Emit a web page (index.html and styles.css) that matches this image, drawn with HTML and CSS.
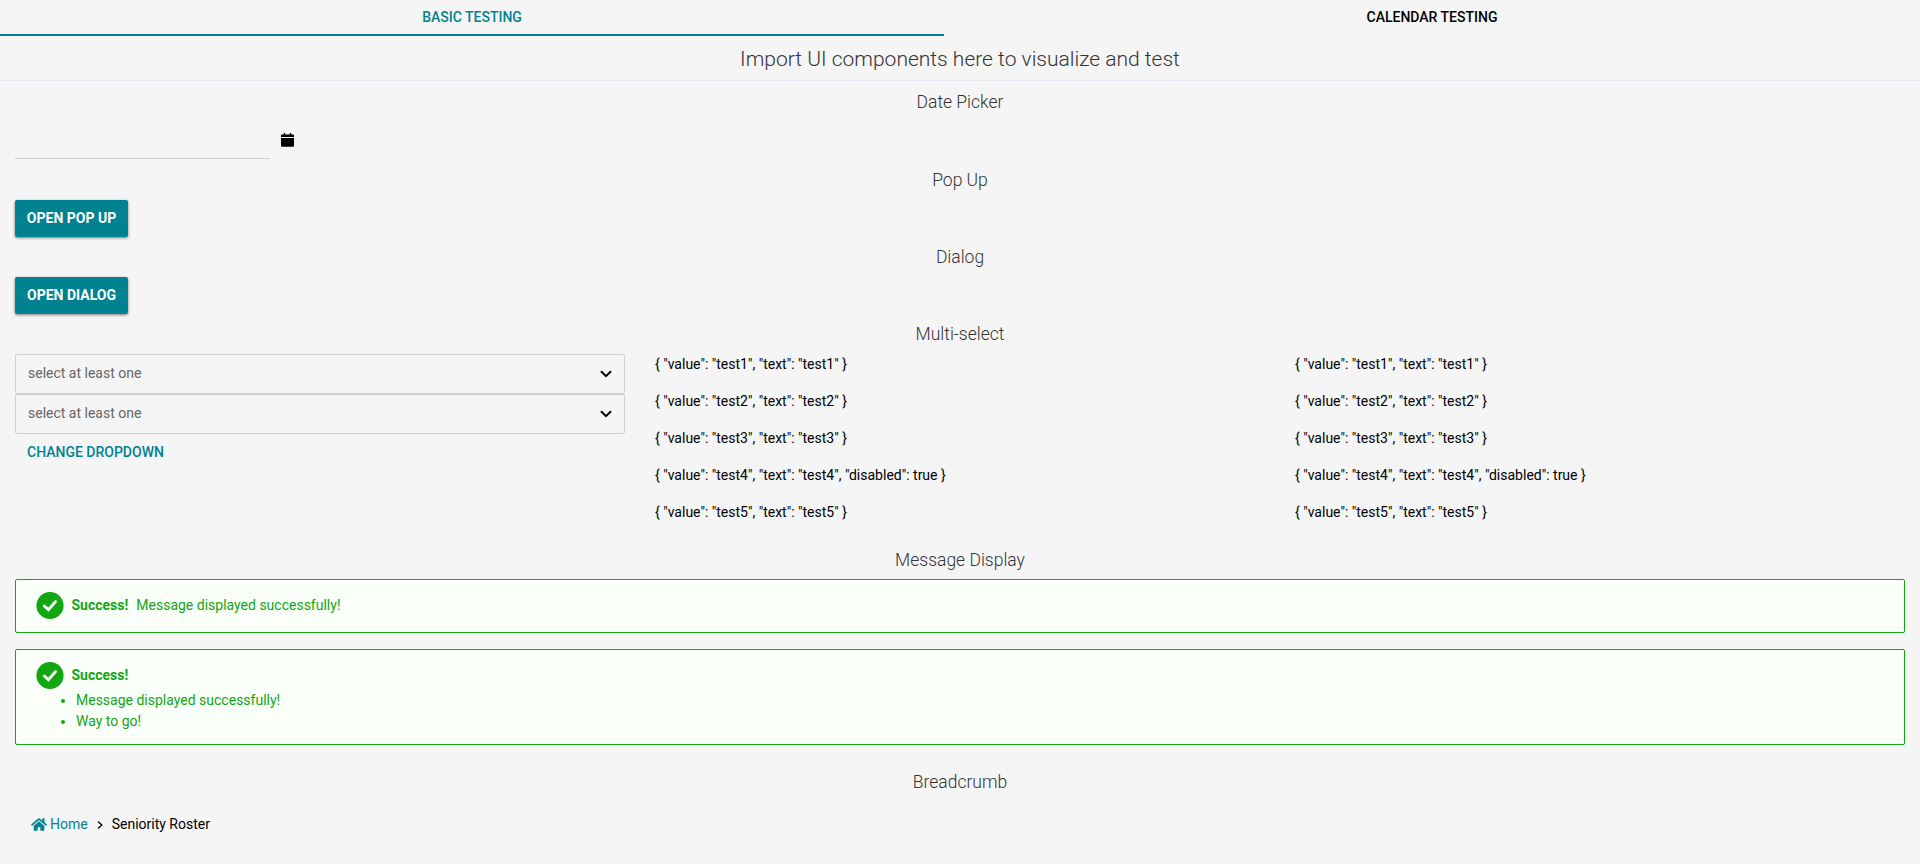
FILE: index.html
```html
<!DOCTYPE html>
<html lang="en">
<head>
<meta charset="utf-8">
<title>UI Components</title>
<link rel="stylesheet" href="styles.css">
</head>
<body>
<nav class="tabs">
  <a class="tab tab-active">BASIC TESTING</a>
  <a class="tab tab-second">CALENDAR TESTING</a>
</nav>
<h1 class="title">Import UI components here to visualize and test</h1>
<main class="content">
  <h2 class="heading heading-low">Date Picker</h2>
  <div class="date-picker">
    <input class="date-input" type="text" aria-label="Date">
    <svg class="calendar-icon" viewBox="0 0 13 14"><path d="M1 1.500h1.800V0h1.400v1.500h4.600V0h1.400v1.500H12a1 1 0 0 1 1 1V4H0V2.500a1 1 0 0 1 1-1zM0 5h13v7.800a1 1 0 0 1-1 1H1a1 1 0 0 1-1-1z"/></svg>
  </div>
  <h2 class="heading">Pop Up</h2>
  <button class="button">OPEN POP UP</button>
  <h2 class="heading">Dialog</h2>
  <button class="button">OPEN DIALOG</button>
  <h2 class="heading">Multi-select</h2>
  <div class="columns">
    <div class="column">
      <div class="select"><span>select at least one</span><svg class="chevron" viewBox="0 0 12 8"><path d="M1 1.200 6 6.200 11 1.200"/></svg></div>
      <div class="select"><span>select at least one</span><svg class="chevron" viewBox="0 0 12 8"><path d="M1 1.200 6 6.200 11 1.200"/></svg></div>
      <button class="link-button">CHANGE DROPDOWN</button>
    </div>
    <div class="column">
      <p>{ "value": "test1", "text": "test1" }</p>
      <p>{ "value": "test2", "text": "test2" }</p>
      <p>{ "value": "test3", "text": "test3" }</p>
      <p>{ "value": "test4", "text": "test4", "disabled": true }</p>
      <p>{ "value": "test5", "text": "test5" }</p>
    </div>
    <div class="column">
      <p>{ "value": "test1", "text": "test1" }</p>
      <p>{ "value": "test2", "text": "test2" }</p>
      <p>{ "value": "test3", "text": "test3" }</p>
      <p>{ "value": "test4", "text": "test4", "disabled": true }</p>
      <p>{ "value": "test5", "text": "test5" }</p>
    </div>
  </div>
  <h2 class="heading heading-low">Message Display</h2>
  <div class="message">
    <div class="message-line">
      <svg class="check" viewBox="0 0 28 27"><circle cx="14" cy="13.500" r="13.600"/><path d="M8.300 14 12.400 17.600 19.400 9.700"/></svg>
      <strong>Success!</strong><span class="message-text">Message displayed successfully!</span>
    </div>
  </div>
  <div class="message message-tall">
    <div class="message-line">
      <svg class="check" viewBox="0 0 28 27"><circle cx="14" cy="13.500" r="13.600"/><path d="M8.300 14 12.400 17.600 19.400 9.700"/></svg>
      <strong>Success!</strong>
    </div>
    <ul class="message-list">
      <li>Message displayed successfully!</li>
      <li>Way to go!</li>
    </ul>
  </div>
  <h2 class="heading heading-low">Breadcrumb</h2>
  <nav class="breadcrumb">
    <svg class="home" viewBox="0 0 576 512"><path d="M280.400 148.300 96 300.100V464a16 16 0 0 0 16 16l112.100-.3a16 16 0 0 0 15.900-16V368a16 16 0 0 1 16-16h64a16 16 0 0 1 16 16v95.600a16 16 0 0 0 16 16.100L464 480a16 16 0 0 0 16-16V300L295.700 148.300a12.200 12.200 0 0 0-15.300 0zM571.600 251.500 488 182.600V44.100a12 12 0 0 0-12-12h-56a12 12 0 0 0-12 12v72.600l-89.500-73.700a48 48 0 0 0-61 0L4.300 251.500a12 12 0 0 0-1.600 16.900l25.500 31a12 12 0 0 0 16.900 1.600l235.200-193.700a12.200 12.200 0 0 1 15.300 0L530.900 301a12 12 0 0 0 16.900-1.600l25.500-31a12 12 0 0 0-1.700-16.900z"/></svg>
    <a class="home-link">Home</a>
    <svg class="separator" viewBox="0 0 6 8"><path d="M1 .5 4.800 4 1 7.500"/></svg>
    <span>Seniority Roster</span>
  </nav>
</main>
</body>
</html>
```

FILE: styles.css
```css
* { box-sizing: border-box; }
body {
  margin: 0;
  background: #f5f5f5;
  color: #000;
  font-family: Roboto, "Liberation Sans", sans-serif;
  font-size: 14px;
  line-height: 21px;
}
button, input { font-family: inherit; font-size: inherit; }
.tabs { display: flex; height: 36px; }
.tab {
  width: 944px;
  height: 36px;
  padding-top: 7px;
  text-align: center;
  font-weight: 500;
}
.tab-active { color: #008291; border-bottom: 2px solid #008291; }
.tab-second { width: 976px; }
.title {
  margin: 0;
  height: 45px;
  border-bottom: 1px solid #e4e9ef;
  text-align: center;
  font-size: 21px;
  font-weight: 300;
  line-height: 46px;
  color: #333;
}
.content { padding: 0 15px; }
.heading {
  margin: 0;
  height: 40px;
  line-height: 41px;
  font-size: 17.500px;
  font-weight: 300;
  text-align: center;
  color: #333;
}
.heading-low { line-height: 43px; }
.date-picker { display: flex; height: 39px; }
.date-input {
  width: 255px;
  height: 38px;
  padding: 0;
  border: 0;
  border-bottom: 1px solid #d0d0d0;
  background: transparent;
}
.calendar-icon { width: 13px; height: 14px; margin: 12px 0 0 10.500px; }
.button {
  display: block;
  width: 113px;
  height: 37px;
  padding: 0 0 2px;
  border: 0;
  border-radius: 2px;
  background: #008291;
  color: #fff;
  font-weight: 700;
  box-shadow: 0 1px 3px rgba(0, 0, 0, .5);
}
.columns { display: grid; grid-template-columns: repeat(3, 610px); column-gap: 30px; height: 185px; }
.column p { margin: 0 0 16px; }
.select {
  display: flex;
  align-items: center;
  justify-content: space-between;
  height: 40px;
  padding: 0 12px 1px;
  border: 1px solid #d0d0d0;
  border-radius: 2px;
  color: #666;
}
.chevron { width: 12px; height: 8px; fill: none; stroke: #000; stroke-width: 2; }
.link-button {
  display: block;
  height: 36px;
  padding: 0 12px;
  border: 0;
  background: transparent;
  color: #008291;
  font-weight: 500;
}
.message {
  height: 54px;
  margin-bottom: 16px;
  padding: 12px 20px;
  border: 1px solid #12a612;
  border-radius: 2px;
  background: #fafffa;
  color: #12a612;
}
.message-tall { height: 96px; }
.message-line { display: flex; align-items: center; height: 27px; margin-bottom: 1px; }
.message-line strong { margin-left: 7.500px; font-weight: 700; }
.message-text { margin-left: 8px; }
.check { width: 28px; height: 27px; fill: #12a612; overflow: visible; }
.check path { fill: none; stroke: #fafffa; stroke-width: 2.900; stroke-linecap: round; }
.message-list { margin: 0; padding-left: 40px; }
.breadcrumb { display: flex; align-items: center; height: 21px; margin: 13px 0 0 16px; }
.home { width: 16px; height: 15px; fill: #008291; margin-right: 3px; }
.home-link { color: #008291; }
.separator { width: 6px; height: 8px; margin: 1px 9px 0 9px; fill: none; stroke: #000; stroke-width: 1.300; }
```
